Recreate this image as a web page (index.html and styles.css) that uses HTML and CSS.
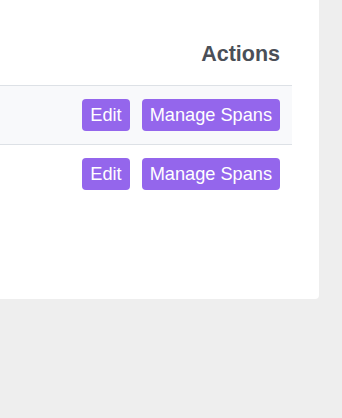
FILE: index.html
```html
<!DOCTYPE html>
<html lang="en">
<head>
  <meta charset="UTF-8" />
  <title>Traces</title>
  <link rel="stylesheet" href="styles.css">
</head>
<body>

  <!-- Tarjeta con la tabla -->
  <div class="card">
    <table class="data-table">
      <thead>
        <tr>
          <th class="col-actions">Actions</th>
        </tr>
      </thead>
      <tbody>
        <tr class="striped">
          <td class="col-actions">
            <div class="actions-row">
              <button class="btn">Edit</button>
              <button class="btn">Manage Spans</button>
            </div>
          </td>
        </tr>
        <tr>
          <td class="col-actions">
            <div class="actions-row">
              <button class="btn">Edit</button>
              <button class="btn">Manage Spans</button>
            </div>
          </td>
        </tr>
      </tbody>
    </table>
  </div>

</body>
</html>
```

FILE: styles.css
```css
body {
  margin: 0;
  padding: 0;
  background: #eeeeee;
  font-family: "Liberation Sans", Arial, sans-serif;
  height: 100vh;
  overflow: hidden;
}

.card {
  margin-left: -40px;
  width: 332px;
  padding: 27px 27px 96px 0;
  background: #ffffff;
  border-radius: 0 0 4px 4px;
}

.data-table {
  width: 100%;
  border-collapse: collapse;
}

.data-table th {
  padding: 12px 12px 16px;
  font-size: 21.5px;
  line-height: 30px;
  font-weight: 700;
  color: #4a4f57;
  border-bottom: 1px solid #dde1e6;
}

.data-table td {
  padding: 13px 12px;
}

.data-table tbody tr + tr td {
  border-top: 1px solid #dde1e6;
}

.striped {
  background: #f8f9fb;
}

.col-actions {
  text-align: right;
}

.actions-row {
  display: flex;
  justify-content: flex-end;
  gap: 12px;
}

.btn {
  padding: 4px 8px;
  font-family: "Liberation Sans", Arial, sans-serif;
  font-size: 18.2px;
  line-height: 24px;
  color: #ffffff;
  background: #9466ec;
  border: none;
  border-radius: 4px;
  cursor: pointer;
}
```
